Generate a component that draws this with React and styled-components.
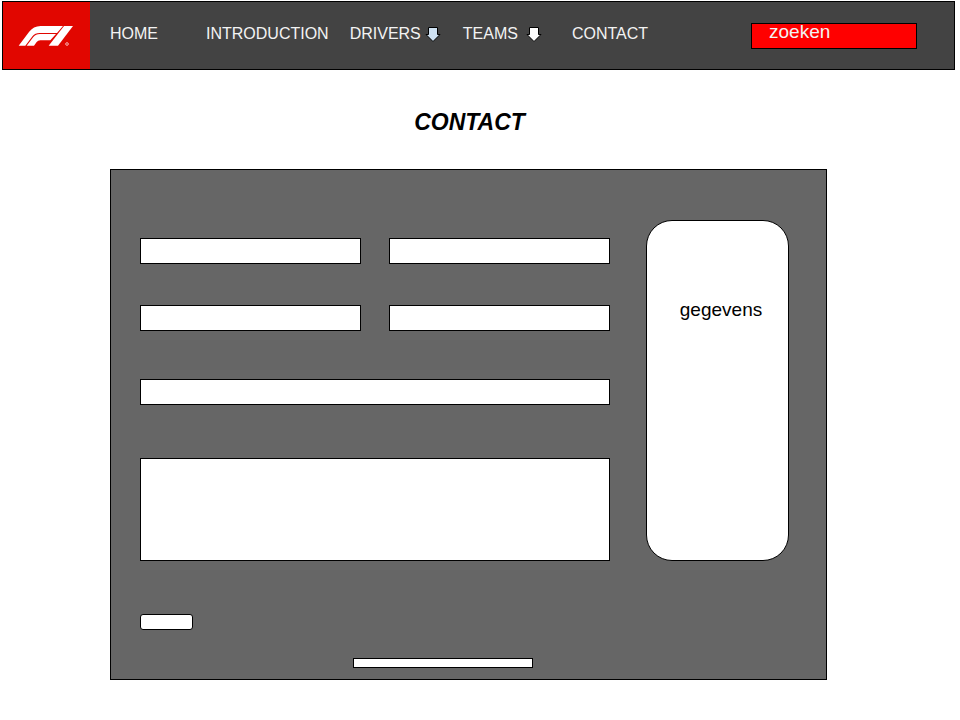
import React from "react";
import styled, { createGlobalStyle } from "styled-components";

const GlobalStyle = createGlobalStyle`
  *, *::before, *::after { box-sizing: border-box; }
  body {
    margin: 0;
    background: #fff;
    color: #000;
    font-family: "Liberation Sans", Arial, Helvetica, sans-serif;
  }
`;

const Header = styled.header`
  display: flex;
  align-items: stretch;
  min-height: 69px;
  margin: 1px 5px 0 2px;
  background: #434343;
  border: 1px solid #000;
`;

const LogoLink = styled.a`
  display: flex;
  flex: none;
  align-items: center;
  justify-content: center;
  width: 87px;
  background: #e10600;
`;

const Nav = styled.nav`
  display: flex;
  flex: 1;
  align-items: center;
  padding: 0 0 4px 20px;
`;

const navText = `
  color: #f3f3f3;
  font-family: inherit;
  font-size: 16px;
  line-height: 20px;
  white-space: nowrap;
`;

const NavLink = styled.a`
  ${navText}
  margin-right: ${(p) => p.$after || 0}px;
  text-decoration: none;
`;

const NavMenu = styled.button`
  ${navText}
  display: flex;
  align-items: center;
  gap: ${(p) => p.$gap}px;
  margin-right: ${(p) => p.$after}px;
  padding: 0;
  border: 0;
  background: none;
`;

const ArrowIcon = styled.svg`
  display: block;
  flex: none;
  margin-top: 3px;
`;

const Search = styled.form`
  display: flex;
  align-items: center;
  margin-right: 37px;
`;

const SearchInput = styled.input`
  width: 166px;
  height: 26px;
  padding: 0 17px 8px;
  border: 1px solid #000;
  border-radius: 0;
  background: #f00;
  color: #f3f3f3;
  font-family: inherit;
  font-size: 19px;

  &::placeholder {
    color: #f3f3f3;
    opacity: 1;
  }
`;

const Main = styled.main`
  margin: 0 133px 40px 110px;
`;

const Title = styled.h1`
  margin: 39px 0 34px;
  padding-left: 2px;
  font-size: 23px;
  line-height: 26px;
  font-style: italic;
  font-weight: 700;
  text-align: center;
`;

const Panel = styled.section`
  padding: 50px 37px 11px 29px;
  border: 1px solid #000;
  background: #666;
`;

const Columns = styled.div`
  display: flex;
  align-items: flex-start;
  gap: 36px;
`;

const ContactForm = styled.form`
  display: grid;
  flex: 1;
  grid-template-columns: 1fr 1fr;
  column-gap: 28px;
  min-width: 0;
  padding-top: 18px;
`;

const Field = styled.input`
  grid-column: ${(p) => (p.$wide ? "1 / -1" : "auto")};
  width: 100%;
  min-width: 0;
  height: 26px;
  margin: 0 0 ${(p) => p.$after}px;
  padding: 2px 6px;
  border: 1px solid #000;
  border-radius: 0;
  background: #fff;
  font: inherit;
`;

const Message = styled.textarea`
  display: block;
  grid-column: 1 / -1;
  width: 100%;
  height: 103px;
  margin: 0 0 53px;
  padding: 6px;
  border: 1px solid #000;
  border-radius: 0;
  background: #fff;
  font: inherit;
  resize: none;
`;

const SendButton = styled.button`
  width: 53px;
  height: 16px;
  padding: 0;
  border: 1px solid #000;
  border-radius: 3px;
  background: #fff;
`;

const Details = styled.aside`
  flex: none;
  width: 143px;
  min-height: 341px;
  padding: 78px 0 0 7px;
  border: 1px solid #000;
  border-radius: 26px;
  background: #fff;
  font-size: 19px;
  line-height: 22px;
  text-align: center;
`;

const FooterBar = styled.div`
  height: 10px;
  margin: 28px 256px 0 213px;
  border: 1px solid #000;
  background: #fff;
`;

function Logo() {
  return (
    <svg width="57" height="22" viewBox="0 0 171 66" fill="#fff" aria-hidden="true">
      <path d="M2 62 L33 21 Q46 3 68 3 H135 L117 24 H65 Q51 24 44 33 L22 62 Z" />
      <path d="M26 62 L46 36 Q53 27 66 27 H114 L97 46 H67 Q60 46 56 51 L48 62 Z" />
      <path d="M138 3 H165 L120 62 H92 Z" />
      <circle cx="147" cy="57" r="4" fill="none" stroke="#fff" strokeWidth="2" />
    </svg>
  );
}

function DownArrow({ fill }) {
  return (
    <ArrowIcon width="16" height="16" viewBox="0 0 16 16" aria-hidden="true">
      <path d="M3.5 0.5 H12.5 V7.5 H15 L8 14.5 L1 7.5 H3.5 Z" fill={fill} stroke="#000" />
    </ArrowIcon>
  );
}

export default function App() {
  const stay = (event) => event.preventDefault();

  return (
    <>
      <GlobalStyle />
      <Header>
        <LogoLink href="#home" aria-label="F1">
          <Logo />
        </LogoLink>
        <Nav>
          <NavLink href="#home" $after={48}>HOME</NavLink>
          <NavLink href="#introduction" $after={21}>INTRODUCTION</NavLink>
          <NavMenu type="button" $gap={4} $after={22}>
            DRIVERS
            <DownArrow fill="#cfe2f3" />
          </NavMenu>
          <NavMenu type="button" $gap={8} $after={30}>
            TEAMS
            <DownArrow fill="#fff" />
          </NavMenu>
          <NavLink href="#contact">CONTACT</NavLink>
        </Nav>
        <Search role="search" onSubmit={stay}>
          <SearchInput type="text" placeholder="zoeken" aria-label="zoeken" />
        </Search>
      </Header>
      <Main>
        <Title>CONTACT</Title>
        <Panel>
          <Columns>
            <ContactForm onSubmit={stay}>
              <Field type="text" aria-label="Voornaam" $after={41} />
              <Field type="text" aria-label="Achternaam" $after={41} />
              <Field type="email" aria-label="E-mail" $after={48} />
              <Field type="tel" aria-label="Telefoon" $after={48} />
              <Field type="text" aria-label="Onderwerp" $wide $after={53} />
              <Message aria-label="Bericht" />
              <SendButton type="submit" aria-label="Verzenden" />
            </ContactForm>
            <Details>gegevens</Details>
          </Columns>
          <FooterBar />
        </Panel>
      </Main>
    </>
  );
}
